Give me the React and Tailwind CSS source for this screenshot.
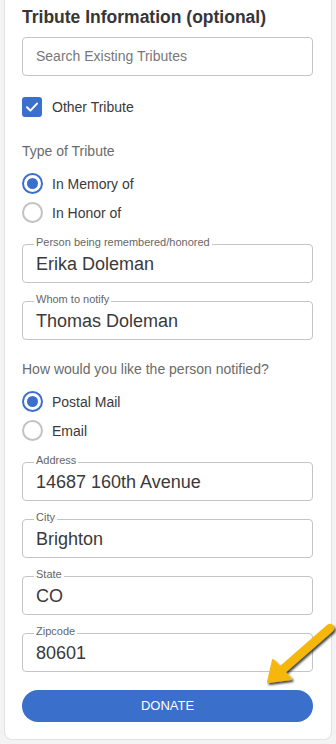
import React from "react";

const font = "font-['Liberation_Sans',Arial,Helvetica,sans-serif]";

function Radio({ checked, label }) {
  return (
    <div className="flex h-[29px] items-center gap-[9px]">
      {checked ? (
        <div className="flex h-[21px] w-[21px] items-center justify-center rounded-full border-[2px] border-[#3a6fcc]">
          <div className="h-[11px] w-[11px] rounded-full bg-[#3a6fcc]" />
        </div>
      ) : (
        <div className="h-[21px] w-[21px] rounded-full border-[2px] border-[#c2c2c2]" />
      )}
      <span className="text-[14px] leading-[20px] text-[#3a3a3a]">{label}</span>
    </div>
  );
}

function Field({ label, value }) {
  return (
    <div className="relative h-[39px] rounded-[4px] border border-[#c4c4c4]">
      <span className="absolute left-[11px] top-[-9px] bg-white px-[2px] text-[11px] leading-[13px] text-[#666666]">
        {label}
      </span>
      <div className="flex h-full items-center pl-[13px] text-[18px] leading-[20px] text-[#3a3a3a]">
        {value}
      </div>
    </div>
  );
}

export default function App() {
  return (
    <div className={`${font} min-h-[744px] bg-[#f3f3f3] px-[4px]`}>
      <div className="relative flex flex-col rounded-b-[8px] border-x border-b border-[#e2e2e2] bg-white pl-[17px] pr-[18px] pt-[7px] pb-[17px]">
        <h2 className="text-[17.5px] font-bold leading-[20px] text-[#363636]">
          Tribute Information (optional)
        </h2>

        <div className="mt-[10px] flex h-[39px] items-center rounded-[4px] border border-[#c4c4c4] pl-[13px] text-[14px] text-[#777777]">
          Search Existing Tributes
        </div>

        <div className="mt-[21px] flex h-[20px] items-center gap-[10px]">
          <div className="flex h-[20px] w-[20px] items-center justify-center rounded-[3px] bg-[#3a6fcc]">
            <svg width="14" height="14" viewBox="0 0 14 14" fill="none">
              <path d="M2 7.3 L5.4 10.6 L12 3.6" stroke="white" strokeWidth="2" strokeLinecap="round" strokeLinejoin="round" />
            </svg>
          </div>
          <span className="text-[14px] leading-[20px] text-[#3a3a3a]">Other Tribute</span>
        </div>

        <div className="mt-[24px] text-[14px] leading-[20px] text-[#6b6b6b]">Type of Tribute</div>
        <div className="mt-[8px] flex flex-col">
          <Radio checked label="In Memory of" />
          <Radio label="In Honor of" />
        </div>

        <div className="mt-[17px] flex flex-col gap-[18px]">
          <Field label="Person being remembered/honored" value="Erika Doleman" />
          <Field label="Whom to notify" value="Thomas Doleman" />
        </div>

        <div className="mt-[19px] text-[14px] leading-[20px] text-[#6b6b6b]">
          How would you like the person notified?
        </div>
        <div className="mt-[8px] flex flex-col">
          <Radio checked label="Postal Mail" />
          <Radio label="Email" />
        </div>

        <div className="mt-[17px] flex flex-col gap-[18px]">
          <Field label="Address" value="14687 160th Avenue" />
          <Field label="City" value="Brighton" />
          <Field label="State" value="CO" />
          <Field label="Zipcode" value="80601" />
        </div>

        <button className="mt-[18px] flex h-[32px] items-center justify-center rounded-full bg-[#3a6fcc] text-[13px] text-white">
          DONATE
        </button>

        <svg
          className="absolute left-[251px] top-[615px]"
          width="85"
          height="80"
          viewBox="0 0 85 80"
          fill="none"
        >
          <defs>
            <filter id="sh" x="-30%" y="-30%" width="160%" height="160%">
              <feDropShadow dx="1.5" dy="2" stdDeviation="1.2" floodColor="#000" floodOpacity="0.75" />
            </filter>
          </defs>
          <g filter="url(#sh)">
            <path d="M74 13 L26 55" stroke="#f6b70d" strokeWidth="8.5" strokeLinecap="round" />
            <path d="M12 67 L17 45 L35 64 Z" fill="#f6b70d" stroke="#f6b70d" strokeWidth="2" strokeLinejoin="round" />
          </g>
        </svg>
      </div>
    </div>
  );
}
